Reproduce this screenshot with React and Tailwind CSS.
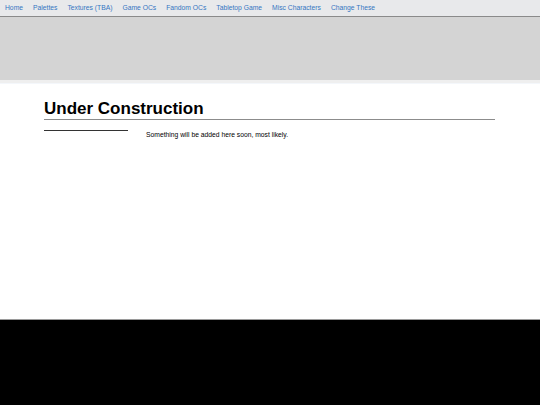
import React from "react"

const links = ["Home", "Palettes", "Textures (TBA)", "Game OCs", "Fandom OCs", "Tabletop Game", "Misc Characters", "Change These"]

function App() {
  return (
    <div className="min-h-[405px] flex flex-col bg-white" style={{fontFamily: '"Liberation Sans", Arial, sans-serif'}}>
      {/* Nav */}
      <nav className="h-[17px] bg-[#e8e9eb] border-b border-[#8a8a8a] flex items-center">
        {links.map((l) => (
          <a key={l} href="#" className="text-[6.75px] text-[#3576c2] px-[5px] leading-none">
            {l}
          </a>
        ))}
      </nav>

      {/* Banner */}
      <div className="h-[63px] bg-[#d4d4d4]"></div>
      <div className="h-[4px] bg-[#efefef] border-b border-[#f4f7fb]"></div>

      {/* Main */}
      <main className="flex-1 px-[44px] pt-[16px] pr-[45px]">
        <h1 className="text-[17px] font-bold text-black leading-[18px] pb-[1px] border-b border-[#8c8c8c]">
          Under Construction
        </h1>
        <div className="flex mt-[10px]">
          <div className="w-[84px] h-[1px] bg-[#333]"></div>
          <p className="ml-[18px] mt-[2px] text-[6.75px] text-black leading-none">
            Something will be added here soon, most likely.
          </p>
        </div>
      </main>

      {/* Footer */}
      <footer className="h-[86px] bg-black border-t border-[#9a9a9a]"></footer>
    </div>
  )
}

export default App
